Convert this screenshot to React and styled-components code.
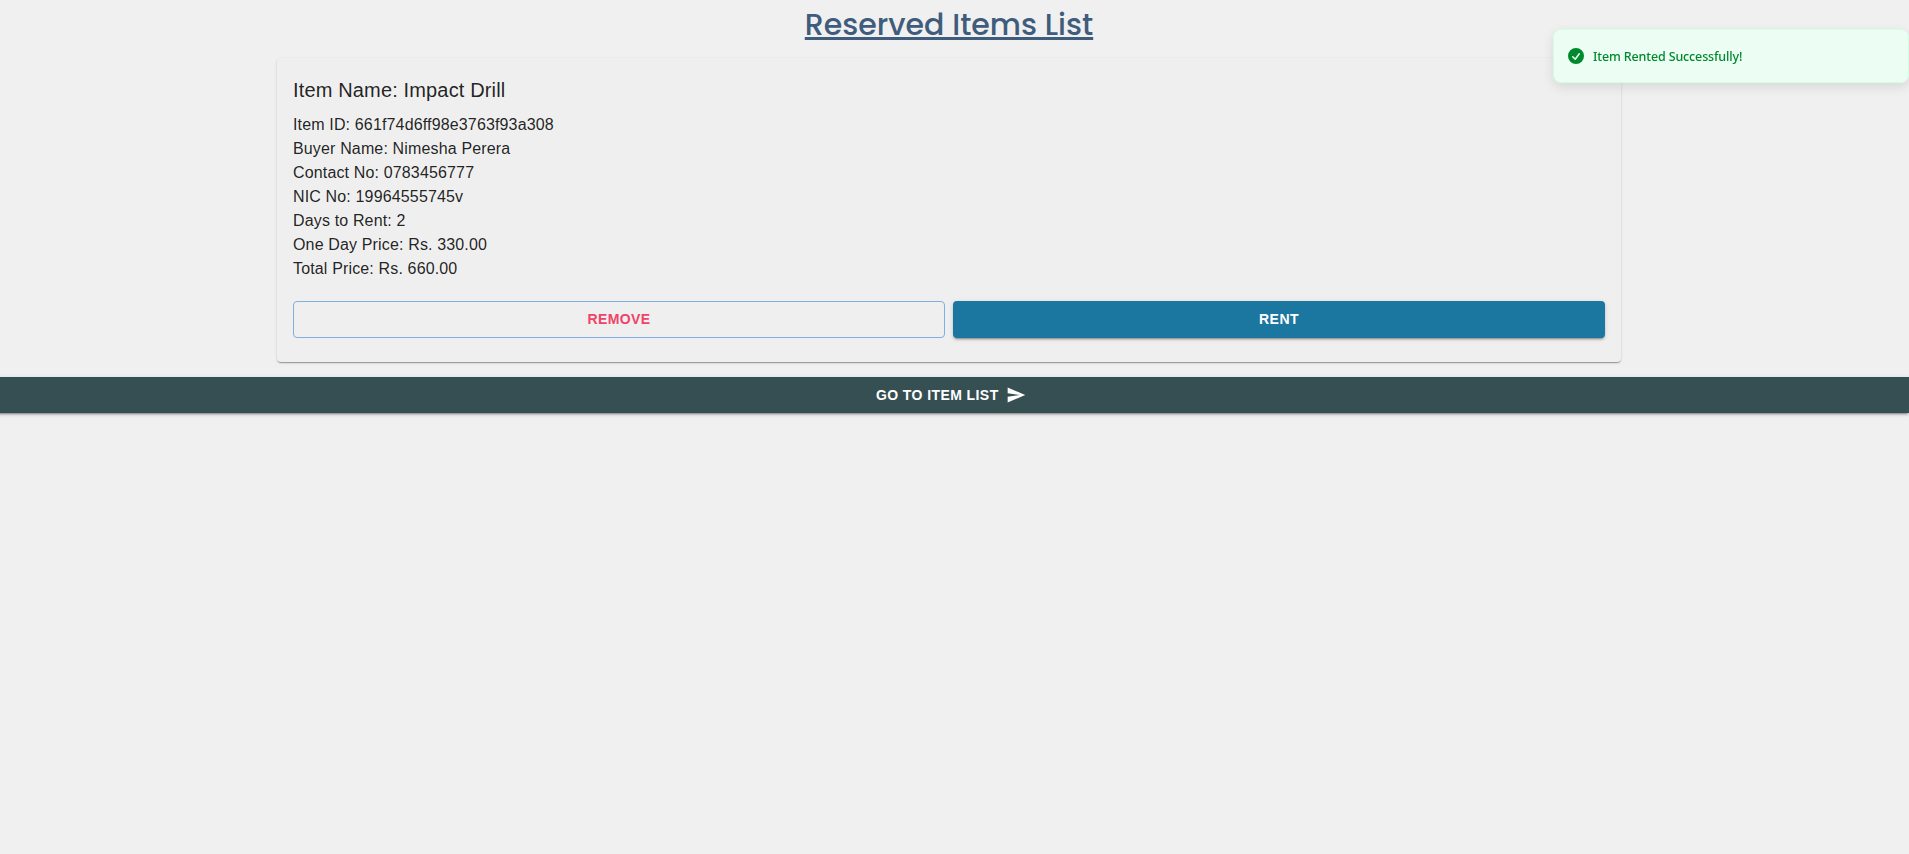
import React from "react";
import styled, { createGlobalStyle } from "styled-components";

const GlobalStyle = createGlobalStyle`
  *, *::before, *::after { box-sizing: border-box; }
  html { background: #f0f0f0; }
  body {
    margin: 0;
    min-height: 100vh;
    overflow: hidden;
    background: #f0f0f0;
    color: rgba(0, 0, 0, 0.87);
    font-family: "Liberation Sans", Arial, sans-serif;
  }
`;

const Page = styled.main`
  display: flex;
  flex-direction: column;
  align-items: center;
  width: 1920px;
  margin-left: -11px;
`;

const Title = styled.h1`
  margin: 0;
  height: 58px;
  padding-top: 2px;
  font-family: Poppins, Inter, sans-serif;
  font-size: 30px;
  font-weight: 500;
  line-height: 45px;
  color: #405c7c;
  text-decoration: underline;
  text-decoration-thickness: 3px;
  text-underline-offset: 2px;
  text-decoration-skip-ink: none;
  white-space: nowrap;
`;

const Card = styled.section`
  width: 70%;
  margin-bottom: 15px;
  padding: 16px 16px 24px;
  border-radius: 4px;
  background: #efefef;
  box-shadow: 0 2px 1px -1px rgba(0, 0, 0, 0.2),
    0 1px 1px 0 rgba(0, 0, 0, 0.14), 0 1px 3px 0 rgba(0, 0, 0, 0.12);
`;

const ItemName = styled.h2`
  margin: 0 0 7px;
  font-size: 20px;
  font-weight: 400;
  line-height: 32px;
  letter-spacing: 0.15px;
`;

const Detail = styled.p`
  margin: 0;
  font-size: 16px;
  line-height: 24px;
  letter-spacing: 0.15px;
`;

const Actions = styled.div`
  display: grid;
  grid-template-columns: 1fr 1fr;
  gap: 8px;
  margin-top: 20px;
`;

const raised = `0 3px 1px -2px rgba(0, 0, 0, 0.2),
  0 2px 2px 0 rgba(0, 0, 0, 0.14), 0 1px 5px 0 rgba(0, 0, 0, 0.12)`;

const Button = styled.button`
  display: flex;
  align-items: center;
  justify-content: center;
  height: 37px;
  width: 100%;
  padding: 0 0 2px;
  border: ${({ $outline }) => ($outline ? `1px solid ${$outline}` : "0")};
  border-radius: 4px;
  background: ${({ $fill }) => $fill || "transparent"};
  color: ${({ $color }) => $color || "#fff"};
  box-shadow: ${({ $fill }) => ($fill ? raised : "none")};
  font: 700 14px/24px "Liberation Sans", Arial, sans-serif;
  letter-spacing: 0.42px;
  text-transform: uppercase;
`;

const BarButton = styled(Button)`
  height: 36px;
  padding: 0;
  border-radius: 0;
`;

const SendIcon = styled.svg`
  width: 20px;
  height: 20px;
  margin: 0 -4px 0 7.5px;
  fill: currentColor;
`;

const Toast = styled.div`
  position: fixed;
  top: 29px;
  right: 0;
  display: flex;
  align-items: center;
  gap: 7px;
  width: 356px;
  height: 54px;
  padding: 16px 12px;
  border: 1px solid #d3fde5;
  border-radius: 8px;
  background: #ecfdf3;
  color: #008a2e;
  box-shadow: 0 4px 12px rgba(0, 0, 0, 0.1);
  font: 500 12.5px/19.5px "Segoe UI", "Noto Sans", sans-serif;
  letter-spacing: -0.14px;
`;

const ToastText = styled.span`
  padding-top: 1px;
`;

const ToastIcon = styled.svg`
  width: 20px;
  height: 20px;
  fill: currentColor;
`;

const details = [
  ["Item ID", "661f74d6ff98e3763f93a308"],
  ["Buyer Name", "Nimesha Perera"],
  ["Contact No", "0783456777"],
  ["NIC No", "19964555745v"],
  ["Days to Rent", "2"],
  ["One Day Price", "Rs. 330.00"],
  ["Total Price", "Rs. 660.00"],
];

export default function App() {
  return (
    <>
      <GlobalStyle />
      <Page>
        <Title>Reserved Items List</Title>
        <Card>
          <ItemName>Item Name: Impact Drill</ItemName>
          {details.map(([label, value]) => (
            <Detail key={label}>{`${label}: ${value}`}</Detail>
          ))}
          <Actions>
            <Button $outline="#7fb0e0" $color="#f0436a">Remove</Button>
            <Button $fill="#1b76a0">Rent</Button>
          </Actions>
        </Card>
        <BarButton $fill="#364f53">
          Go to Item List
          <SendIcon viewBox="0 0 24 24">
            <path d="M2.01 21 23 12 2.01 3 2 10l15 2-15 2z" />
          </SendIcon>
        </BarButton>
      </Page>
      <Toast role="status">
        <ToastIcon viewBox="0 0 20 20">
          <path
            fillRule="evenodd"
            clipRule="evenodd"
            d="M10 18a8 8 0 100-16 8 8 0 000 16zm3.857-9.809a.75.75 0 00-1.214-.882l-3.483 4.79-1.88-1.88a.75.75 0 10-1.06 1.061l2.5 2.5a.75.75 0 001.137-.089l4-5.5z"
          />
        </ToastIcon>
        <ToastText>Item Rented Successfully!</ToastText>
      </Toast>
    </>
  );
}
